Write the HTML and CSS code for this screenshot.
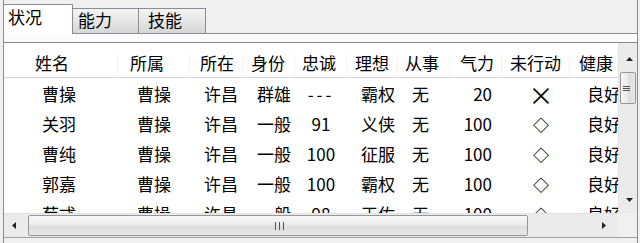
FILE: index.html
```html
<!DOCTYPE html>
<html lang="zh-CN">
<head>
	<meta charset="UTF-8">
	<title>武将列表</title>
	<link rel="stylesheet" href="styles.css">
</head>
<body>
	<div class="win">
		<div class="tabs">
			<div class="tab on">状况</div>
			<div class="tab t2">能力</div>
			<div class="tab t3">技能</div>
		</div>
		<div class="panel">
			<div class="list">
				<div class="view">
					<div class="cols head">
						<span>姓名</span><span>所属</span><span>所在</span><span>身份</span><span>忠诚</span><span>理想</span><span>从事</span><span>气力</span><span>未行动</span><span>健康</span>
					</div>
					<div class="rows">
						<div class="cols row">
							<span>曹操</span><span>曹操</span><span>许昌</span><span>群雄</span><span class="dash">---</span><span>霸权</span><span>无</span><span>20</span><span class="no">×</span><span>良好</span>
						</div>
						<div class="cols row">
							<span>关羽</span><span>曹操</span><span>许昌</span><span>一般</span><span>91</span><span>义侠</span><span>无</span><span>100</span><span class="yes">◇</span><span>良好</span>
						</div>
						<div class="cols row">
							<span>曹纯</span><span>曹操</span><span>许昌</span><span>一般</span><span>100</span><span>征服</span><span>无</span><span>100</span><span class="yes">◇</span><span>良好</span>
						</div>
						<div class="cols row">
							<span>郭嘉</span><span>曹操</span><span>许昌</span><span>一般</span><span>100</span><span>霸权</span><span>无</span><span>100</span><span class="yes">◇</span><span>良好</span>
						</div>
						<div class="cols row">
							<span>荀彧</span><span>曹操</span><span>许昌</span><span>一般</span><span>98</span><span>王佐</span><span>无</span><span>100</span><span class="yes">◇</span><span>良好</span>
						</div>
					</div>
				</div>
				<div class="vscroll">
					<div class="btn up"><svg width="7" height="4" viewBox="0 0 7 4"><polygon points="0,4 3.5,0 7,4" fill="#222"/></svg></div>
					<div class="vthumb"><svg width="7" height="7" viewBox="0 0 7 7"><path d="M0 1.5h7M0 3.5h7M0 5.5h7" stroke="#555" stroke-width="1"/></svg></div>
					<div class="fill"></div>
					<div class="btn down"><svg width="7" height="4" viewBox="0 0 7 4"><polygon points="0,0 7,0 3.5,4" fill="#222"/></svg></div>
				</div>
				<div class="hscroll">
					<div class="btn left"><svg width="4" height="7" viewBox="0 0 4 7"><polygon points="4,0 4,7 0,3.5" fill="#222"/></svg></div>
					<div class="hthumb"><svg width="11" height="8" viewBox="0 0 11 8"><path d="M1.5 0v8M5.5 0v8M9.5 0v8" stroke="#555" stroke-width="1"/></svg></div>
					<div class="fill"></div>
					<div class="btn right"><svg width="4" height="7" viewBox="0 0 4 7"><polygon points="0,0 4,3.5 0,7" fill="#222"/></svg></div>
				</div>
				<div class="corner"></div>
			</div>
		</div>
	</div>
</body>
</html>
```

FILE: styles.css
```css
*{ margin: 0; padding: 0; box-sizing: border-box;}
body{ width: 640px; height: 243px; overflow: hidden; background: #f0f0f0; color: #000; font: 17px/20px "Noto Sans CJK SC", sans-serif;}
.win{ width: 635px; height: 243px; margin-left: 3px; border-left: 1px solid #8a8c90; border-right: 1px solid #8a8c90;}

/* tabs */
.tabs{ display: flex; align-items: flex-end; height: 34px; border-bottom: 1px solid #898c95;}
.tab{ height: 25px; padding: 1px 0 0 5px; border: 1px solid #898c95; border-left: 0; border-bottom: 0; background: linear-gradient(#f4f4f4, #e6e6e6 50%, #d6d6d6);}
.tab.on{ width: 70px; height: 30px; margin: 0 0 -1px -1px; padding: 2px 0 0 4px; border-left: 1px solid #898c95; background: #fff;}
.tab.t2{ width: 66px;}
.tab.t3{ width: 67px; padding-left: 9px;}
.panel{ padding-top: 8px; background: #fbfbfb;}

/* list view */
.list{ display: grid; grid-template-columns: 614px 19px; grid-template-rows: 170px 24px; border-top: 1px solid #828790; border-bottom: 1px solid #a0a0a0;}
.view{ overflow: hidden; background: #fff;}
.cols{ display: grid; grid-template-columns: 114px 72px 53px 52px 52px 51px 52px 52px 68px 50px; white-space: nowrap;}
.head{ height: 35px; padding-top: 10px; border-bottom: 1px solid #d5d5d5;}
.head span{ border-right: 1px solid #f4f4f4;}
.head span:nth-child(1){ padding-left: 31px;}
.head span:nth-child(2){ padding-left: 12px;}
.head span:nth-child(3){ padding-left: 10px;}
.head span:nth-child(4){ padding-left: 8px;}
.head span:nth-child(5){ padding-left: 7px;}
.head span:nth-child(6){ padding-left: 8px;}
.head span:nth-child(7){ padding-left: 7px;}
.head span:nth-child(8){ padding-left: 10px;}
.head span:nth-child(9){ padding-left: 8px;}
.head span:nth-child(10){ padding-left: 9px; border-right: 0;}
.rows{ padding-top: 1px;}
.row{ height: 30px; line-height: 30px;}
.row span:nth-child(1){ padding-left: 38px;}
.row span:nth-child(2){ padding-left: 19px;}
.row span:nth-child(3),
.row span:nth-child(4),
.row span:nth-child(6),
.row span:nth-child(7){ padding-left: 14px;}
.row span:nth-child(5){ text-align: center;}
.row span:nth-child(8){ padding-right: 10px; text-align: right;}
.row span:nth-child(9){ padding-left: 10px; text-align: center;}
.row span:nth-child(10){ padding-left: 17px;}
.row .dash{ letter-spacing: 3px;}
.row .no{ font-size: 25px; line-height: 30px;}
.row .yes{ font-size: 16px; font-weight: 700;}

/* scrollbars */
.btn{ display: flex; align-items: center; justify-content: center;}
.btn svg{ display: block;}
.fill{ flex: 1;}
.vscroll{ display: flex; flex-direction: column; background: #ebebeb; border-left: 1px solid #e2e2e2;}
.vscroll .up{ height: 29px; padding: 2px 0 0 2px;}
.vscroll .down{ height: 26px; padding: 0 0 0 2px;}
.vthumb{ display: flex; align-items: center; justify-content: center; height: 32px; margin: 0 1px; padding-right: 3px; border: 1px solid #979797; border-radius: 2px; background: linear-gradient(90deg, #f7f7f7, #ececec 45%, #dedede 55%, #e6e6e6);}
.hscroll{ display: flex; background: #ebebeb; border-top: 1px solid #e2e2e2;}
.hscroll .left{ width: 24px; padding-right: 5px;}
.hscroll .right{ width: 24px; padding-right: 4px;}
.hthumb{ display: flex; align-items: center; justify-content: center; width: 500px; margin: 1px 0 1px; padding-left: 2px; border: 1px solid #979797; border-radius: 2px; background: linear-gradient(#f7f7f7, #ececec 45%, #dedede 55%, #e6e6e6);}
.corner{ background: #f0f0f0;}
```
